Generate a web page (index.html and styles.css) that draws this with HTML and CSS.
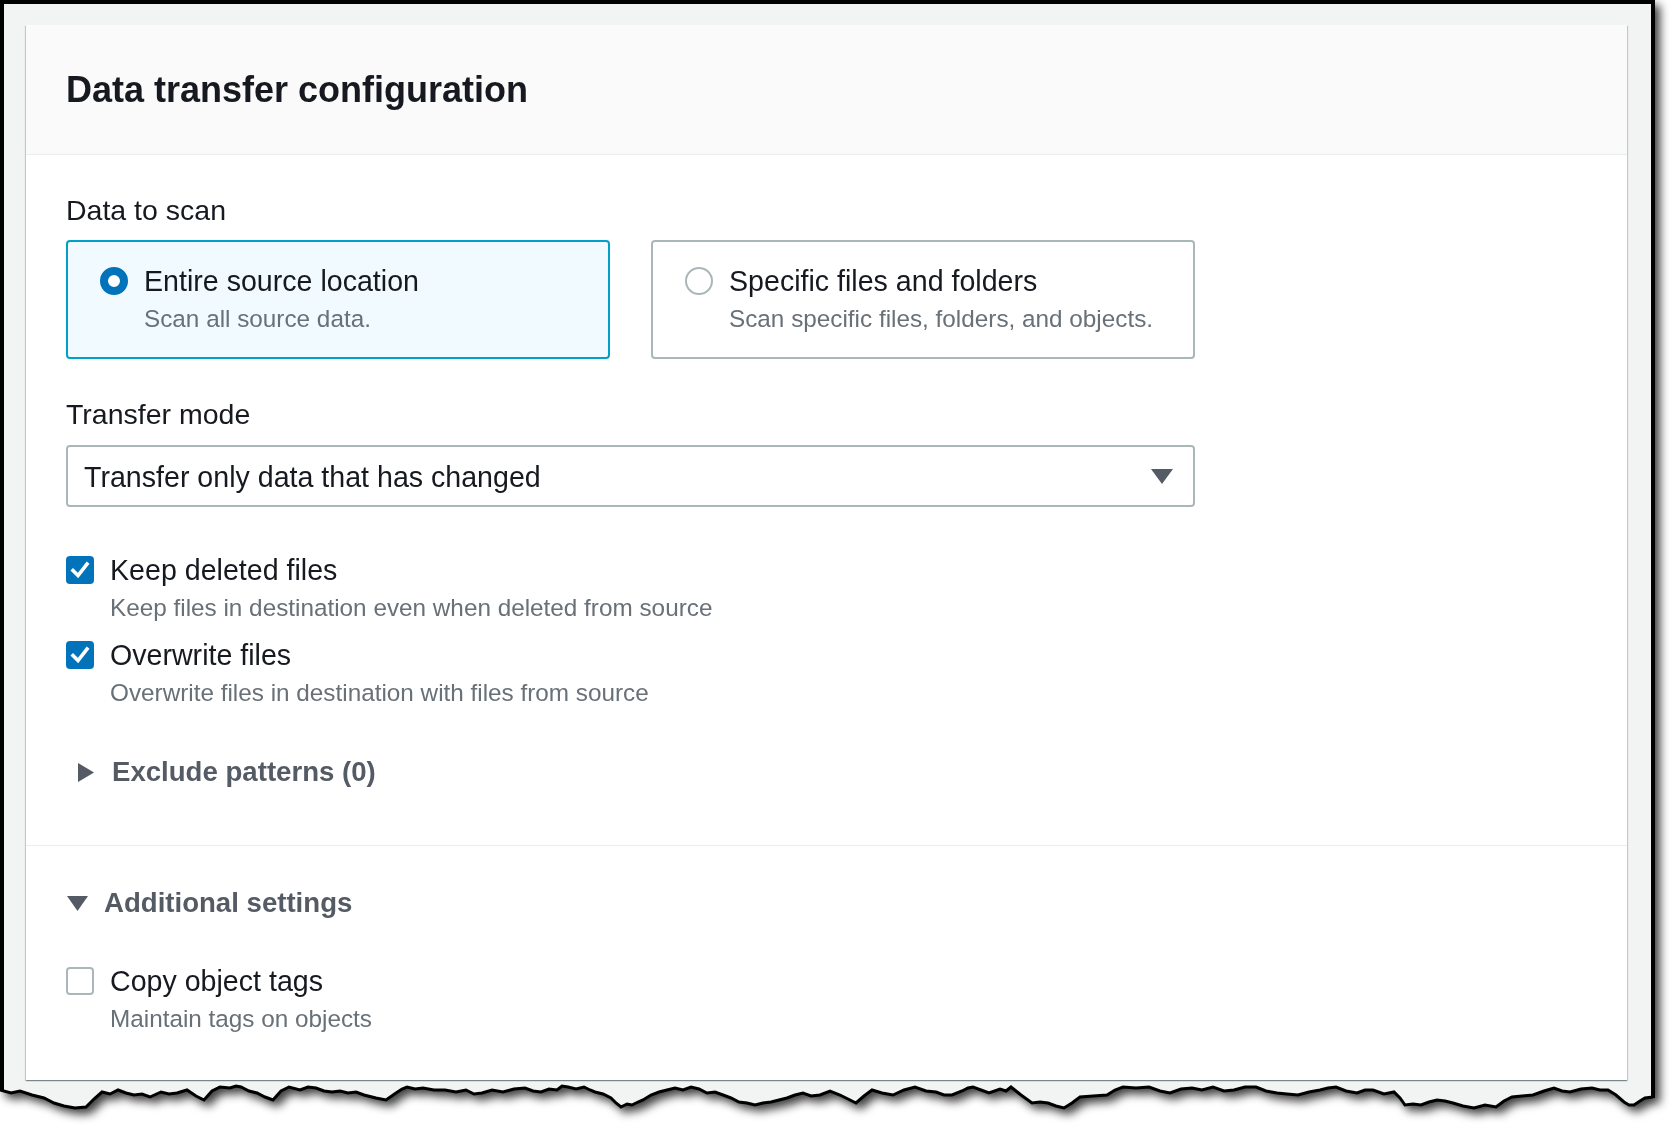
FILE: index.html
```html
<!DOCTYPE html>
<html lang="en">
<head>
<meta charset="utf-8">
<title>Data transfer configuration</title>
<link rel="stylesheet" href="styles.css">
</head>
<body>
<div class="sheet">
  <div class="frame">
    <section class="card">
      <header class="card-header">
        <h2>Data transfer configuration</h2>
      </header>
      <div class="card-body">
        <div class="field-label">Data to scan</div>
        <div class="tiles">
          <div class="tile selected">
            <span class="radio on"></span>
            <div class="tile-text">
              <div class="label">Entire source location</div>
              <div class="desc">Scan all source data.</div>
            </div>
          </div>
          <div class="tile">
            <span class="radio"></span>
            <div class="tile-text">
              <div class="label">Specific files and folders</div>
              <div class="desc">Scan specific files, folders, and objects.</div>
            </div>
          </div>
        </div>

        <div class="field-label mode-label">Transfer mode</div>
        <div class="select">
          <span class="select-value">Transfer only data that has changed</span>
          <svg class="select-caret" width="22" height="15" viewBox="0 0 22 15"><polygon points="0,0 22,0 11,15" fill="#545b64"/></svg>
        </div>

        <div class="check-row first">
          <span class="checkbox checked"><svg width="28" height="28" viewBox="0 0 28 28"><polyline points="7,14.5 12,19.5 21,8" fill="none" stroke="#fff" stroke-width="3.6" stroke-linecap="square"/></svg></span>
          <div class="check-text">
            <div class="label">Keep deleted files</div>
            <div class="desc">Keep files in destination even when deleted from source</div>
          </div>
        </div>
        <div class="check-row second">
          <span class="checkbox checked"><svg width="28" height="28" viewBox="0 0 28 28"><polyline points="7,14.5 12,19.5 21,8" fill="none" stroke="#fff" stroke-width="3.6" stroke-linecap="square"/></svg></span>
          <div class="check-text">
            <div class="label">Overwrite files</div>
            <div class="desc">Overwrite files in destination with files from source</div>
          </div>
        </div>

        <div class="expander nested">
          <svg class="caret-right" width="16" height="19" viewBox="0 0 16 19"><polygon points="0,0 16,9.5 0,19" fill="#545b64"/></svg>
          <span>Exclude patterns (0)</span>
        </div>
      </div>

      <div class="card-section">
        <div class="expander">
          <svg class="caret-down" width="21" height="15" viewBox="0 0 21 15"><polygon points="0,0 21,0 10.5,15" fill="#545b64"/></svg>
          <span>Additional settings</span>
        </div>
        <div class="check-row third">
          <span class="checkbox"></span>
          <div class="check-text">
            <div class="label">Copy object tags</div>
            <div class="desc">Maintain tags on objects</div>
          </div>
        </div>
      </div>
    </section>
  </div>
  <svg class="torn" width="1655" height="40" viewBox="0 0 1655 40">
    <polygon fill="#f2f3f3" points="0,0 0,8 11,11 20,9 32,13 44,16 54,21 64,24 75,26 86,25 94,17 102,10 110,12 118,8 126,11 134,13 142,12 150,15 161,10 169,12 177,11 187,8 196,14 204,18 212,9 220,5 230,6 236,4 241,5 249,9 257,11 265,15 273,18 281,9 289,5 300,8 308,5 316,6 324,9 332,10 340,9 348,11 356,10 364,13 376,16 386,18 396,11 402,7 407,5 415,7 423,6 434,8 445,8 456,10 466,8 474,12 482,11 492,8 503,10 514,7 525,6 533,9 541,10 549,7 557,8 562,4 568,5 576,7 584,5 590,8 595,10 603,12 611,16 616,21 621,25 627,22 632,23 638,20 643,18 651,13 659,10 667,8 675,6 683,8 691,5 699,7 707,11 715,10 723,13 731,16 739,20 747,21 755,23 763,21 771,20 779,18 787,16 795,13 803,11 811,14 820,13 830,9 840,13 848,17 856,21 864,14 872,8 882,11 893,13 904,8 915,5 926,9 936,10 944,13 952,13 962,9 968,6 973,5 981,8 989,11 1000,7 1006,9 1011,5 1021,13 1032,21 1040,20 1048,21 1056,24 1064,26 1072,21 1080,15 1093,14 1107,13 1115,8 1123,5 1136,6 1149,5 1160,9 1170,11 1181,7 1192,6 1202,8 1213,5 1224,9 1234,8 1245,5 1256,5 1266,9 1277,11 1287,12 1298,13 1309,10 1320,8 1328,6 1336,5 1346,9 1357,11 1365,8 1373,8 1384,12 1394,10 1400,16 1405,23 1413,22 1421,23 1429,20 1437,18 1445,19 1453,21 1463,24 1474,26 1485,23 1496,25 1504,19 1512,15 1522,14 1533,13 1544,9 1554,6 1562,9 1570,10 1581,7 1592,6 1600,8 1608,8 1616,13 1624,20 1629,23 1634,23 1640,19 1645,16 1653,15 1655,15 1655,0"/>
    <polyline fill="none" stroke="#000" stroke-width="3" stroke-linejoin="miter" points="0,8 11,11 20,9 32,13 44,16 54,21 64,24 75,26 86,25 94,17 102,10 110,12 118,8 126,11 134,13 142,12 150,15 161,10 169,12 177,11 187,8 196,14 204,18 212,9 220,5 230,6 236,4 241,5 249,9 257,11 265,15 273,18 281,9 289,5 300,8 308,5 316,6 324,9 332,10 340,9 348,11 356,10 364,13 376,16 386,18 396,11 402,7 407,5 415,7 423,6 434,8 445,8 456,10 466,8 474,12 482,11 492,8 503,10 514,7 525,6 533,9 541,10 549,7 557,8 562,4 568,5 576,7 584,5 590,8 595,10 603,12 611,16 616,21 621,25 627,22 632,23 638,20 643,18 651,13 659,10 667,8 675,6 683,8 691,5 699,7 707,11 715,10 723,13 731,16 739,20 747,21 755,23 763,21 771,20 779,18 787,16 795,13 803,11 811,14 820,13 830,9 840,13 848,17 856,21 864,14 872,8 882,11 893,13 904,8 915,5 926,9 936,10 944,13 952,13 962,9 968,6 973,5 981,8 989,11 1000,7 1006,9 1011,5 1021,13 1032,21 1040,20 1048,21 1056,24 1064,26 1072,21 1080,15 1093,14 1107,13 1115,8 1123,5 1136,6 1149,5 1160,9 1170,11 1181,7 1192,6 1202,8 1213,5 1224,9 1234,8 1245,5 1256,5 1266,9 1277,11 1287,12 1298,13 1309,10 1320,8 1328,6 1336,5 1346,9 1357,11 1365,8 1373,8 1384,12 1394,10 1400,16 1405,23 1413,22 1421,23 1429,20 1437,18 1445,19 1453,21 1463,24 1474,26 1485,23 1496,25 1504,19 1512,15 1522,14 1533,13 1544,9 1554,6 1562,9 1570,10 1581,7 1592,6 1600,8 1608,8 1616,13 1624,20 1629,23 1634,23 1640,19 1645,16 1653,15"/>
    <line x1="2" y1="0" x2="2" y2="9" stroke="#000" stroke-width="4"/>
    <line x1="1653" y1="0" x2="1653" y2="16" stroke="#000" stroke-width="4"/>
  </svg>
</div>
</body>
</html>
```

FILE: styles.css
```css
* {
  box-sizing: border-box;
}

html, body {
  margin: 0;
  padding: 0;
  background: #ffffff;
}

body {
  font-family: "Liberation Sans", Arial, sans-serif;
  color: #16191f;
  width: 1676px;
  height: 1132px;
  overflow: hidden;
}

.sheet {
  width: 1655px;
  filter: drop-shadow(5px 5px 5px rgba(0, 0, 0, 0.75));
}

.frame {
  background: #f2f3f3;
  border: 4px solid #000;
  border-bottom: none;
  padding: 21px 24px 2px 22px;
}

.torn {
  display: block;
}

.card {
  background: #ffffff;
  box-shadow: 0 1px 1px 0 rgba(0, 28, 36, 0.3), 1px 1px 1px 0 rgba(0, 28, 36, 0.15), -1px 1px 1px 0 rgba(0, 28, 36, 0.15);
}

.card-header {
  background: #fafafa;
  border-bottom: 1px solid #eaeded;
  padding: 43px 40px 42px;
}

.card-header h2 {
  margin: 0;
  font-size: 36px;
  line-height: 44px;
  font-weight: 700;
  color: #16191f;
}

.card-body {
  padding: 33px 40px 51px;
}

.field-label {
  font-size: 28.5px;
  line-height: 44px;
  color: #16191f;
}

.mode-label {
  margin-top: 33px;
}

.tiles {
  margin-top: 8px;
  display: grid;
  grid-template-columns: 544px 544px;
  column-gap: 41px;
}

.tile {
  display: flex;
  align-items: flex-start;
  gap: 16px;
  border: 2px solid #aab7b8;
  border-radius: 4px;
  padding: 17px 30px 22px 32px;
  background: #ffffff;
}

.tile.selected {
  border-color: #00a1c9;
  background: #f1faff;
}

.radio {
  flex: none;
  width: 28px;
  height: 28px;
  margin-top: 8px;
  border-radius: 50%;
  border: 2px solid #aab7b8;
  background: #ffffff;
}

.radio.on {
  border: 8px solid #0073bb;
}

.label {
  font-size: 28.6px;
  line-height: 44px;
  color: #16191f;
}

.desc {
  font-size: 24.3px;
  line-height: 32px;
  color: #687078;
}

.select {
  margin-top: 9px;
  width: 1129px;
  height: 62px;
  border: 2px solid #aab7b8;
  border-radius: 4px;
  padding: 0 20px 0 16px;
  display: flex;
  align-items: center;
  justify-content: space-between;
  background: #ffffff;
}

.select-value {
  font-size: 28.6px;
  line-height: 44px;
  color: #16191f;
  padding-top: 2px;
}

.check-row {
  display: flex;
  align-items: flex-start;
  gap: 16px;
}

.check-row.first {
  margin-top: 41px;
}

.check-row.second {
  margin-top: 9px;
}

.check-row.third {
  margin-top: 34px;
}

.checkbox {
  flex: none;
  width: 28px;
  height: 28px;
  margin-top: 8px;
  border-radius: 4px;
  border: 2px solid #aab7b8;
  background: #ffffff;
  display: block;
}

.checkbox.checked {
  border: none;
  background: #0073bb;
}

.checkbox svg {
  display: block;
}

.expander {
  display: flex;
  align-items: center;
  font-size: 27.6px;
  line-height: 44px;
  font-weight: 700;
  color: #545b64;
}

.expander.nested {
  margin-top: 41px;
}

.caret-right {
  margin-left: 12px;
  margin-right: 18px;
  flex: none;
}

.caret-down {
  margin-left: 1px;
  margin-right: 16px;
  flex: none;
}

.card-section {
  border-top: 1px solid #eaeded;
  padding: 35px 40px 45px;
}
```
